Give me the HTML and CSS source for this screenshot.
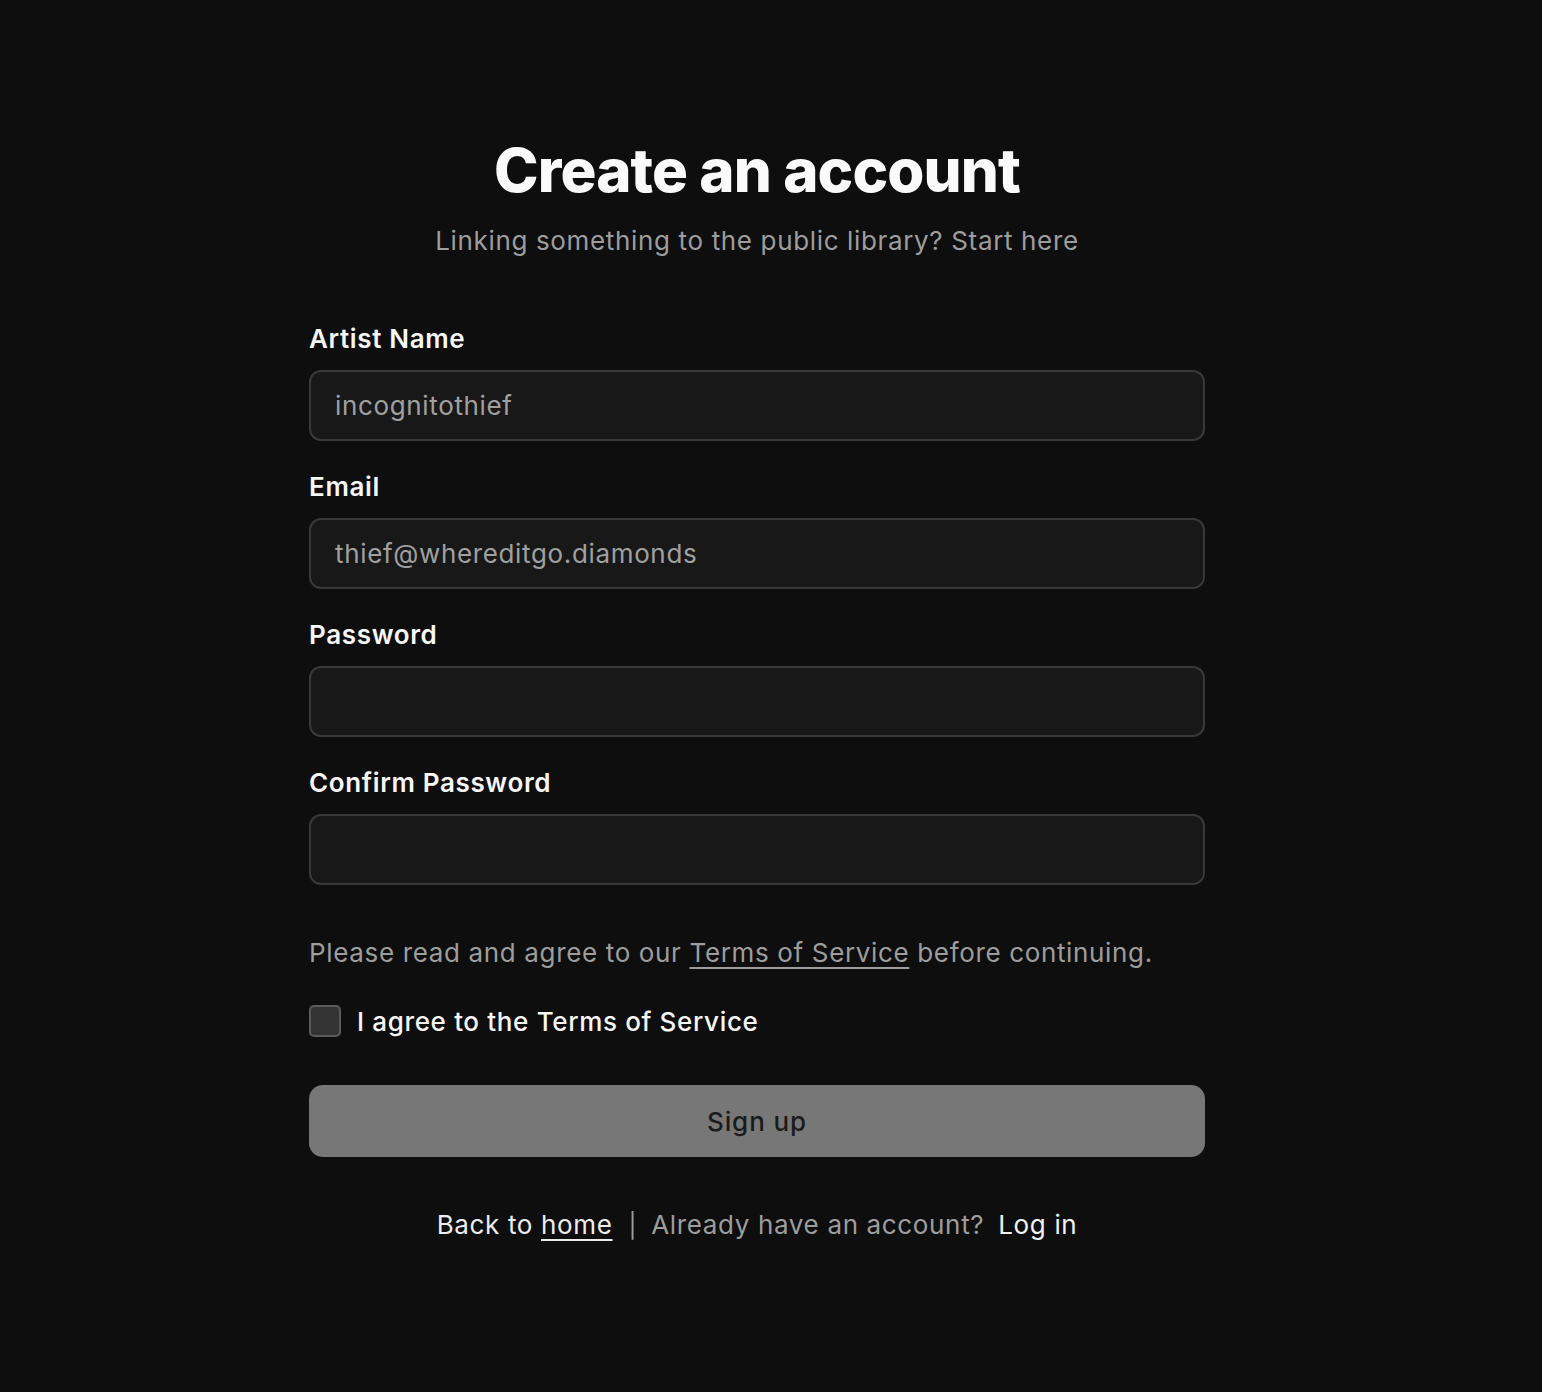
FILE: index.html
```html
<!DOCTYPE html>
<html lang="en">
<head>
<meta charset="utf-8">
<title>Create an account</title>
<link rel="stylesheet" href="styles.css">
</head>
<body>
<main class="page">
  <div class="card">
    <h1 class="title">Create an account</h1>
    <p class="subtitle">Linking something to the public library? Start here</p>
    <form class="form">
      <div class="field">
        <label class="label">Artist Name</label>
        <div class="input">incognitothief</div>
      </div>
      <div class="field">
        <label class="label">Email</label>
        <div class="input">thief@whereditgo.diamonds</div>
      </div>
      <div class="field">
        <label class="label">Password</label>
        <div class="input"></div>
      </div>
      <div class="field">
        <label class="label">Confirm Password</label>
        <div class="input"></div>
      </div>
      <p class="terms">Please read and agree to our <a class="terms-link">Terms of Service</a> before continuing.</p>
      <div class="check-row">
        <span class="checkbox"></span>
        <span class="check-label">I agree to the Terms of Service</span>
      </div>
      <div class="button">Sign up</div>
    </form>
    <p class="footer">Back to <a class="home-link">home</a><span class="sep">|</span><span class="muted">Already have an account?</span><a class="login">Log in</a></p>
  </div>
</main>
</body>
</html>
```

FILE: styles.css
```css
html, body {
  margin: 0;
  padding: 0;
  background: #0e0e0e;
}
body {
  font-family: Inter, "Noto Sans", sans-serif;
  color: #f5f5f5;
  min-height: 1392px;
  letter-spacing: 0.65px;
}
.page {
  padding-right: 28px;
  padding-top: 132px;
}
.card {
  width: 896px;
  margin: 0 auto;
}
.title {
  margin: 0;
  text-align: center;
  font-size: 60px;
  line-height: 76px;
  font-weight: 800;
  letter-spacing: -0.9px;
  color: #fafafa;
}
.subtitle {
  margin: 14px 0 0;
  text-align: center;
  font-size: 26px;
  line-height: 38px;
  color: #9d9d9d;
}
.form {
  margin-top: 60px;
}
.field {
  margin-bottom: 27px;
}
.label {
  display: block;
  font-size: 26px;
  line-height: 38px;
  font-weight: 600;
  color: #f7f7f7;
  margin-bottom: 12px;
}
.input {
  box-sizing: border-box;
  height: 71px;
  border: 2px solid #393939;
  border-radius: 12px;
  background: #181818;
  padding: 0 24px;
  font-size: 26px;
  line-height: 67px;
  color: #a0a0a0;
}
.terms {
  margin: 49px 0 0;
  font-size: 26px;
  line-height: 38px;
  color: #9d9d9d;
}
.terms-link {
  color: #9d9d9d;
  text-decoration: underline;
  text-underline-offset: 5px;
  text-decoration-thickness: 2px;
}
.check-row {
  margin-top: 34px;
  display: flex;
  align-items: center;
  gap: 16px;
  height: 30px;
}
.checkbox {
  box-sizing: border-box;
  width: 32px;
  height: 32px;
  border: 2px solid #5a5a5a;
  border-radius: 5px;
  background: #333333;
}
.check-label {
  font-size: 26px;
  font-weight: 500;
  color: #f7f7f7;
}
.button {
  margin-top: 49px;
  height: 72px;
  border-radius: 14px;
  background: #777777;
  color: #1b1b1b;
  font-size: 26px;
  font-weight: 500;
  letter-spacing: 0.9px;
  display: flex;
  align-items: center;
  justify-content: center;
}
.footer {
  margin: 49px 0 0;
  text-align: center;
  font-size: 26px;
  line-height: 38px;
  color: #ececec;
}
.home-link {
  color: #ececec;
  text-decoration: underline;
  text-underline-offset: 5px;
  text-decoration-thickness: 2px;
}
.sep {
  color: #9d9d9d;
  margin: 0 14px 0 16px;
  font-size: 24px;
}
.muted {
  color: #9d9d9d;
}
.login {
  color: #f2f2f2;
  margin-left: 14px;
}
```
